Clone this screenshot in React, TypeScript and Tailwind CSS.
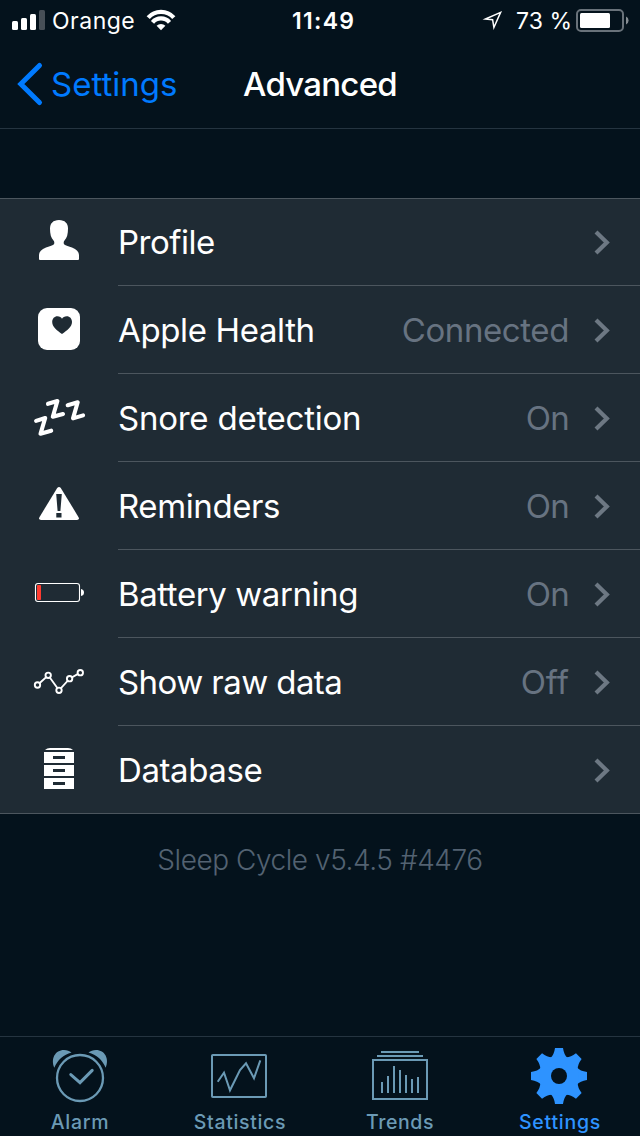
import React from 'react';

interface SettingsRowProps {
  icon: React.ReactNode;
  label: string;
  labelClass: string;
  value?: string;
  valueClass?: string;
  last?: boolean;
}

const StatusBar: React.FC = () => (
  <div className="flex h-10 items-center pt-px">
    <div className="flex w-[292px] items-center whitespace-nowrap">
      <svg width="52" height="40" viewBox="0 1 52 40" fill="white">
        <rect x="12" y="21" width="6" height="9" rx="1.5" />
        <rect x="21" y="18" width="6" height="12" rx="1.5" />
        <rect x="30" y="14" width="6" height="16" rx="1.5" />
        <rect x="39" y="10" width="6" height="20" rx="1.5" fill="#474f57" />
      </svg>
      <span className="w-[94px] text-[23px] leading-10 tracking-[0.5px]">Orange</span>
      <svg width="32" height="40" viewBox="0 1 32 40" fill="none" stroke="white" strokeWidth="4.2">
        <path d="M2.2 17.6a17 17 0 0 1 25.6 0" />
        <path d="M6.5 22.3a11.2 11.2 0 0 1 17 0" />
        <path d="M15 30.2l-4.4-4.4a6.6 6.6 0 0 1 8.8 0z" fill="white" stroke="none" />
      </svg>
    </div>
    <div className="w-[190px] text-[23px] font-semibold leading-10 tracking-[1.3px]">11:49</div>
    <svg width="34" height="40" viewBox="0 1 34 40" fill="none" stroke="white" strokeWidth="1.5">
      <path d="M3.5 19L18.6 12.4L11.9 27.5L10.6 19.7Z" />
    </svg>
    <div className="w-[60px] whitespace-nowrap text-[23px] leading-10 tracking-[0.1px]">73 %</div>
    <svg width="54" height="40" viewBox="0 1 54 40">
      <rect x="1" y="10" width="46" height="21" rx="4" fill="none" stroke="#69727a" strokeWidth="2" />
      <rect x="4" y="13" width="30" height="15" rx="1.5" fill="white" />
      <path d="M50 16.5a4.4 4.4 0 0 1 0 8z" fill="#858c92" />
    </svg>
  </div>
);

const NavBar: React.FC = () => (
  <header className="flex h-[89px] items-center border-b border-[#253440] leading-[89px]">
    <button type="button" className="flex w-[243px] items-center text-[#007aff]">
      <svg width="51" height="88" viewBox="0 0 51 88" fill="none" stroke="currentColor" strokeWidth="5" strokeLinecap="round" strokeLinejoin="miter">
        <path d="M39.5 25.5L20.8 44L39.5 62.5" />
      </svg>
      <span className="text-[33px]">Settings</span>
    </button>
    <h1 className="text-[33px] font-medium tracking-[-0.75px]">Advanced</h1>
  </header>
);

const SettingsRow: React.FC<SettingsRowProps> = ({ icon, label, labelClass, value, valueClass, last = false }) => (
  <li className="flex h-[88px]">
    <svg width="118" height="88" viewBox="0 0 118 88" fill="white" className="shrink-0">
      {icon}
    </svg>
    <div className={last ? 'flex flex-1 items-center' : 'flex flex-1 items-center border-b border-[#4c565e]'}>
      <span className={`flex-1 whitespace-nowrap text-[33px] leading-[88px] ${labelClass}`}>{label}</span>
      {value && <span className={`whitespace-nowrap text-[33px] leading-[88px] text-[#677381] ${valueClass}`}>{value}</span>}
      <svg width="71" height="88" viewBox="0 0 71 88" fill="none" stroke="#6d7883" strokeWidth="4.2" className="shrink-0">
        <path d="M27 34L37.8 44.5L27 55" />
      </svg>
    </div>
  </li>
);

const rows: SettingsRowProps[] = [
  {
    label: 'Profile',
    labelClass: 'tracking-[-0.5px]',
    icon: <path d="M59 22C53 22 50 25.5 50 30.5C50 36 51 40 53.5 42.5C54.5 43.5 54.6 45.5 53.7 46.5C52.5 47.7 49 48.2 46 49.5C41.5 51.4 39 54 39 57V61Q39 62 40 62H78Q79 62 79 61V57C79 54 76.5 51.4 72 49.5C69 48.2 65.5 47.7 64.3 46.5C63.4 45.5 63.5 43.5 64.5 42.5C67 40 68 36 68 30.5C68 25.5 65 22 59 22Z" />,
  },
  {
    label: 'Apple Health',
    labelClass: 'tracking-[-0.36px]',
    value: 'Connected',
    valueClass: 'tracking-[-0.4px]',
    icon: (
      <>
        <rect x="38" y="22" width="42" height="42" rx="9" />
        <path d="M62 48C57 44.5 52.2 41 52.2 36C52.2 32.5 54.5 30.2 57.4 30.2C59.6 30.2 61.3 31.2 62 32.8C62.7 31.2 64.6 30.2 66.8 30.2C69.7 30.2 72 32.5 72 36C72 41 67 44.5 62 48Z" fill="#1f2b34" />
      </>
    ),
  },
  {
    label: 'Snore detection',
    labelClass: 'tracking-[-0.24px]',
    value: 'On',
    valueClass: 'tracking-[-0.8px]',
    icon: (
      <g fill="none" stroke="white" strokeWidth="4.1" strokeLinecap="round" strokeLinejoin="round">
        <path d="M36.1 46.9L45.2 44L40.5 59.8L51.2 56.7" />
        <path d="M48 29.8L57.4 27L52.8 42.8L63 40" />
        <path d="M67.7 31.2L77.7 28.3L73 44.4L83.1 41.4" />
      </g>
    ),
  },
  {
    label: 'Reminders',
    labelClass: 'tracking-[-0.4px]',
    value: 'On',
    valueClass: 'tracking-[-0.8px]',
    icon: (
      <>
        <path d="M57.2 26Q59 24 60.8 26L78.7 55.4Q79.6 58 77 58H41Q38.4 58 39.3 55.4Z" />
        <path d="M56.2 32H61.8L60.4 49H57.6ZM56.3 51H61.5V55.4H56.3Z" fill="#1f2b34" />
      </>
    ),
  },
  {
    label: 'Battery warning',
    labelClass: 'tracking-[-0.42px]',
    value: 'On',
    valueClass: 'tracking-[-0.8px]',
    icon: (
      <>
        <rect x="35.5" y="33.5" width="44" height="18" rx="2.5" fill="none" stroke="white" strokeWidth="1.1" />
        <rect x="37" y="35" width="4" height="15" rx="0.7" fill="#ff3b30" />
        <path d="M81 39Q84 39.5 84 42.5T81 46Z" />
      </>
    ),
  },
  {
    label: 'Show raw data',
    labelClass: 'tracking-[-0.57px]',
    value: 'Off',
    valueClass: '',
    icon: (
      <g fill="#1f2b34" stroke="white" strokeWidth="1.9">
        <path d="M37.5 47L48.2 37.3L59 52.3L69.6 40.7L80.3 34.7" fill="none" />
        <circle cx="37.5" cy="47" r="2.7" />
        <circle cx="48.2" cy="37.3" r="2.7" />
        <circle cx="59" cy="52.3" r="2.7" />
        <circle cx="69.6" cy="40.7" r="2.7" />
        <circle cx="80.3" cy="34.7" r="2.7" />
      </g>
    ),
  },
  {
    label: 'Database',
    labelClass: 'tracking-[-0.4px]',
    icon: (
      <>
        <path d="M45 24Q47 22 50 22H68Q71 22 73 24Z" />
        <path d="M44 26H74V37H44ZM44 39H74V50H44ZM44 52H74V63H44Z" />
        <path d="M53 30H65V33H53ZM53 43H65V46H53ZM53 56H65V59H53Z" fill="#1f2b34" />
      </>
    ),
  },
];

const toothAngles = [0, 45, 90, 135, 180, 225, 270, 315];

const tabs = [
  {
    label: 'Alarm',
    className: 'text-[#6b9ab5] tracking-[0.7px]',
    icon: (
      <>
        <circle cx="80" cy="41" r="23" strokeWidth="2.3" />
        <path d="M70.8 37.6L80 45.6L92.2 33.4" strokeWidth="3" strokeLinecap="round" />
        <path d="M54.3 30.7C50.5 22 55 13 64 13C67 13 69.5 14 71.5 15.4C63.5 17.8 57.5 22.8 54.3 30.7Z" fill="currentColor" stroke="none" />
        <path d="M105.7 30.7C109.5 22 105 13 96 13C93 13 90.5 14 88.5 15.4C96.5 17.8 102.5 22.8 105.7 30.7Z" fill="currentColor" stroke="none" />
      </>
    ),
  },
  {
    label: 'Statistics',
    className: 'text-[#6b9ab5] tracking-[0.65px]',
    icon: (
      <>
        <rect x="52" y="18" width="54" height="42" rx="0.8" strokeWidth="2" />
        <path d="M57.7 44.7L64 35.7L70 53.3L80 33L86 26.3L94 41.3L100.3 23.3" strokeWidth="2" />
      </>
    ),
  },
  {
    label: 'Trends',
    className: 'text-[#6b9ab5] tracking-[0.6px]',
    icon: (
      <>
        <rect x="53" y="23" width="54" height="39" strokeWidth="2" />
        <path d="M57 19H103M61 15H99M62 56V45M68 56V39M74 56V29M80 56V33M86 56V38M92 56V42M98 56V40" strokeWidth="2" />
      </>
    ),
  },
  {
    label: 'Settings',
    className: 'text-[#2e93ff] tracking-[0.75px]',
    icon: (
      <g fill="currentColor" stroke="none">
        {toothAngles.map((angle) => (
          <path key={angle} d="M75 11H83Q84 18 87.5 21L79 39L70.5 21Q74 18 75 11Z" transform={`rotate(${angle} 79 39)`} />
        ))}
        <circle cx="79" cy="39" r="19.5" />
        <circle cx="79" cy="39" r="8" fill="#04121c" />
      </g>
    ),
  },
];

const TabBar: React.FC = () => (
  <nav className="grid h-[100px] grid-cols-4 border-t border-[#253440]">
    {tabs.map((tab) => (
      <button type="button" key={tab.label} className={`flex flex-col items-center text-[19.5px] font-medium ${tab.className}`}>
        <svg width="160" height="70" viewBox="0 0 160 70" fill="none" stroke="currentColor">
          {tab.icon}
        </svg>
        <span className="leading-[30px]">{tab.label}</span>
      </button>
    ))}
  </nav>
);

const App: React.FC = () => {
  return (
    <div className="flex h-[1136px] w-[640px] flex-col overflow-hidden bg-[#04121c] font-['Inter',sans-serif] text-white">
      <StatusBar />
      <NavBar />
      <main className="flex-1 pt-[69px]">
        <div className="border-b border-[#4c565e] bg-[#1f2b34] shadow-[inset_0_1px_0_#4c565e]">
          <ul className="h-[615px]">
            {rows.map((row, i) => (
              <SettingsRow key={row.label} {...row} last={i === rows.length - 1} />
            ))}
          </ul>
        </div>
        <p className="pt-[26px] text-center text-[28px] font-light leading-[40px] tracking-[-0.45px] text-[#536272]">Sleep Cycle v5.4.5 #4476</p>
      </main>
      <TabBar />
    </div>
  );
};

export default App;
